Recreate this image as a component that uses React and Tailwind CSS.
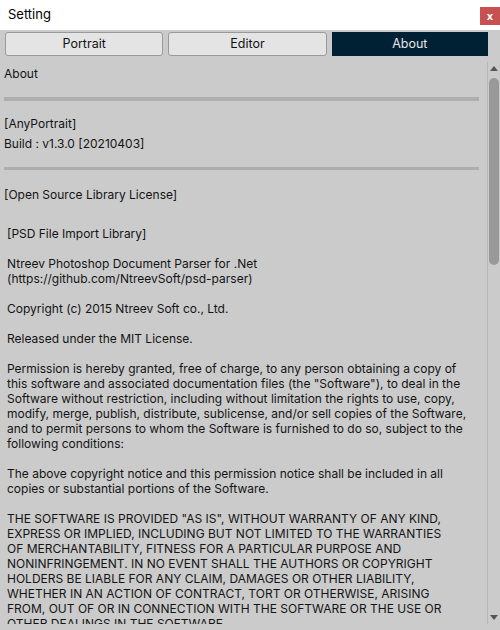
import React from 'react';

const license = [
  '[PSD File Import Library]',
  '',
  'Ntreev Photoshop Document Parser for .Net',
  '(https://github.com/NtreevSoft/psd-parser)',
  '',
  'Copyright (c) 2015 Ntreev Soft co., Ltd.',
  '',
  'Released under the MIT License.',
  '',
  'Permission is hereby granted, free of charge, to any person obtaining a copy of',
  'this software and associated documentation files (the "Software"), to deal in the',
  'Software without restriction, including without limitation the rights to use, copy,',
  'modify, merge, publish, distribute, sublicense, and/or sell copies of the Software,',
  'and to permit persons to whom the Software is furnished to do so, subject to the',
  'following conditions:',
  '',
  'The above copyright notice and this permission notice shall be included in all',
  'copies or substantial portions of the Software.',
  '',
  'THE SOFTWARE IS PROVIDED "AS IS", WITHOUT WARRANTY OF ANY KIND,',
  'EXPRESS OR IMPLIED, INCLUDING BUT NOT LIMITED TO THE WARRANTIES',
  'OF MERCHANTABILITY, FITNESS FOR A PARTICULAR PURPOSE AND',
  'NONINFRINGEMENT. IN NO EVENT SHALL THE AUTHORS OR COPYRIGHT',
  'HOLDERS BE LIABLE FOR ANY CLAIM, DAMAGES OR OTHER LIABILITY,',
  'WHETHER IN AN ACTION OF CONTRACT, TORT OR OTHERWISE, ARISING',
  'FROM, OUT OF OR IN CONNECTION WITH THE SOFTWARE OR THE USE OR',
  'OTHER DEALINGS IN THE SOFTWARE.',
];

const Tab = ({ label, active }) => (
  <div
    className={
      active
        ? 'flex-1 h-[24px] flex items-center justify-center bg-[#002133] text-[#e6e6e6]'
        : 'flex-1 h-[24px] flex items-center justify-center bg-[#e4e4e4] border border-[#999] rounded-[3px] text-[#111]'
    }
  >
    {label}
  </div>
);

const App = () => {
  return (
    <div className="w-[500px] h-[630px] overflow-hidden bg-[#cbcbcb] flex flex-col text-[12px] text-[#141414] font-['Inter',sans-serif]">
      <div className="h-[30px] bg-white flex items-center justify-between pl-[8px] shrink-0">
        <span className="text-[13px] text-[#000]">Setting</span>
        <div className="w-[20px] h-[18px] mt-[2px] bg-[#c75050] text-white flex items-center justify-center text-[11px] font-bold leading-none">x</div>
      </div>
      <div className="flex gap-[5px] pl-[5px] pr-[12px] pt-[2px] pb-[6px] shrink-0 text-[12.5px]">
        <Tab label="Portrait" />
        <Tab label="Editor" />
        <Tab label="About" active />
      </div>
      <div className="flex flex-1 min-h-0 mb-[6px]">
        <div className="flex-1 pl-[4px] pr-[8px] pt-[4px] leading-[15px] overflow-hidden">
          <div>About</div>
          <div className="h-[4px] bg-[#aeaeae] mt-[16px]" />
          <div className="mt-[15px]">[AnyPortrait]</div>
          <div className="mt-[5px]">Build : v1.3.0 [20210403]</div>
          <div className="h-[3px] bg-[#aeaeae] mt-[16px]" />
          <div className="mt-[17px]">[Open Source Library License]</div>
          <div className="mt-[24px] pl-[3px] whitespace-pre">
            {license.map((l, i) => (
              <div key={i} className="h-[15px]">{l}</div>
            ))}
          </div>
        </div>
        <div className="w-[13px] shrink-0 border-l border-[#b8b8b8] flex flex-col items-center pt-[4px]">
          <svg width="8" height="5" viewBox="0 0 8 5"><path d="M0 5 L4 0 L8 5 Z" fill="#555" /></svg>
          <div className="w-[10px] h-[187px] mt-[7px] rounded-full bg-[#999]" />
          <div className="flex-1" />
          <svg width="8" height="5" viewBox="0 0 8 5" className="mb-[4px]"><path d="M0 0 L4 5 L8 0 Z" fill="#555" /></svg>
        </div>
      </div>
    </div>
  );
};

export default App;
